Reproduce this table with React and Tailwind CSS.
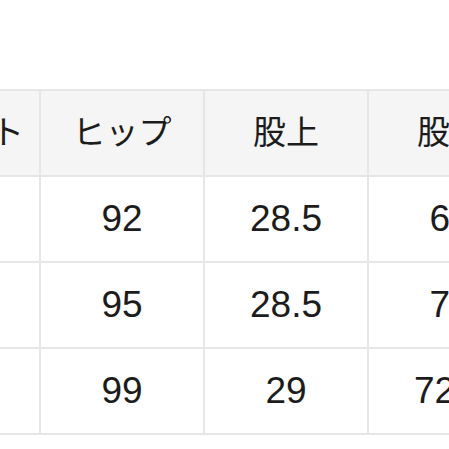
const header = ['ウエスト', 'ヒップ', '股上', '股下', '裾幅'];
const rows = [
  ['', '92', '28.5', '68', ''],
  ['', '95', '28.5', '70', ''],
  ['', '99', '29', '72.5', ''],
];

function Cell({ children, head }) {
  return (
    <div
      className={
        'flex h-[86px] items-center justify-center border-b-2 border-r-2 border-[#e6e6e6] text-[#1c1c1c] ' +
        (head ? 'bg-[#f5f5f5] text-[33px]' : 'bg-white text-[37px]')
      }
    >
      {children}
    </div>
  );
}

export default function App() {
  return (
    <div
      className="h-[449px] w-[449px] overflow-hidden bg-white"
      style={{ fontFamily: '"Liberation Sans", "Noto Sans CJK JP", sans-serif' }}
    >
      <div className="ml-[-123px] mt-[89px] grid w-max grid-cols-[repeat(5,164px)] border-t-2 border-[#e6e6e6]">
        {header.map((h, i) => (
          <Cell key={'h' + i} head>
            {h}
          </Cell>
        ))}
        {rows.map((r, ri) =>
          r.map((v, ci) => <Cell key={ri + '-' + ci}>{v}</Cell>),
        )}
      </div>
    </div>
  );
}
